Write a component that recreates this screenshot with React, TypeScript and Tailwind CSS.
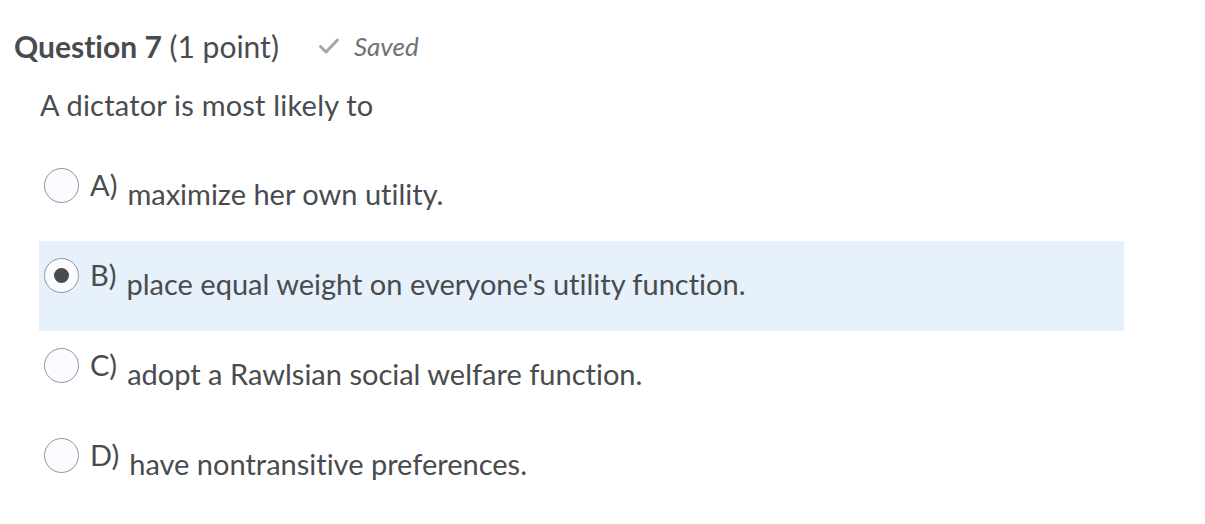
import React from "react";

const options = [
  { key: "A)", text: "maximize her own utility." },
  { key: "B)", text: "place equal weight on everyone's utility function.", selected: true },
  { key: "C)", text: "adopt a Rawlsian social welfare function." },
  { key: "D)", text: "have nontransitive preferences." },
];

function Radio({ checked }: { checked?: boolean }) {
  return (
    <span className="flex h-[35px] w-[35px] shrink-0 items-center justify-center rounded-full border border-[#90969a] bg-[#f9fbff]">
      {checked && <span className="h-[15px] w-[15px] rounded-full bg-[#494c4e]" />}
    </span>
  );
}

export default function App() {
  return (
    <div className="h-[524px] w-[1205px] bg-white font-['Lato',sans-serif] text-[#494c4e] [font-variant-ligatures:none]">
      {/* header */}
      <div className="flex items-center pl-[14px] pt-[26px]">
        <h2 className="text-[30px] leading-[40px]">
          <span className="font-bold">Question 7</span> (1 point)
        </h2>
        <div className="ml-[38px] flex items-center gap-[13px] text-[#6e7376]">
          <svg width="24" height="20" viewBox="0 0 24 20" fill="none">
            <path d="M3.5 10.5l5.5 5.5L20.5 4" stroke="#a3a7a9" strokeWidth="3" strokeLinecap="round" strokeLinejoin="round" />
          </svg>
          <span className="text-[26px] italic">Saved</span>
        </div>
      </div>

      <p className="mt-[20px] pl-[40px] text-[29px] leading-[38px] tracking-[0.2px]">A dictator is most likely to</p>

      {/* options */}
      <div className="ml-[39px] mt-[27px] w-[1085px]">
        {options.map((o) => (
          <div
            key={o.key}
            className={`flex h-[90px] items-start pl-[5px] pt-[17px] ${o.selected ? "bg-[#e6f1fb]" : ""}`}
          >
            <Radio checked={o.selected} />
            <span className="-mt-[2px] ml-[11px] text-[29px] leading-[38px]">{o.key}</span>
            <span className="ml-[10px] mt-[7px] text-[29px] leading-[38px]">{o.text}</span>
          </div>
        ))}
      </div>
    </div>
  );
}
